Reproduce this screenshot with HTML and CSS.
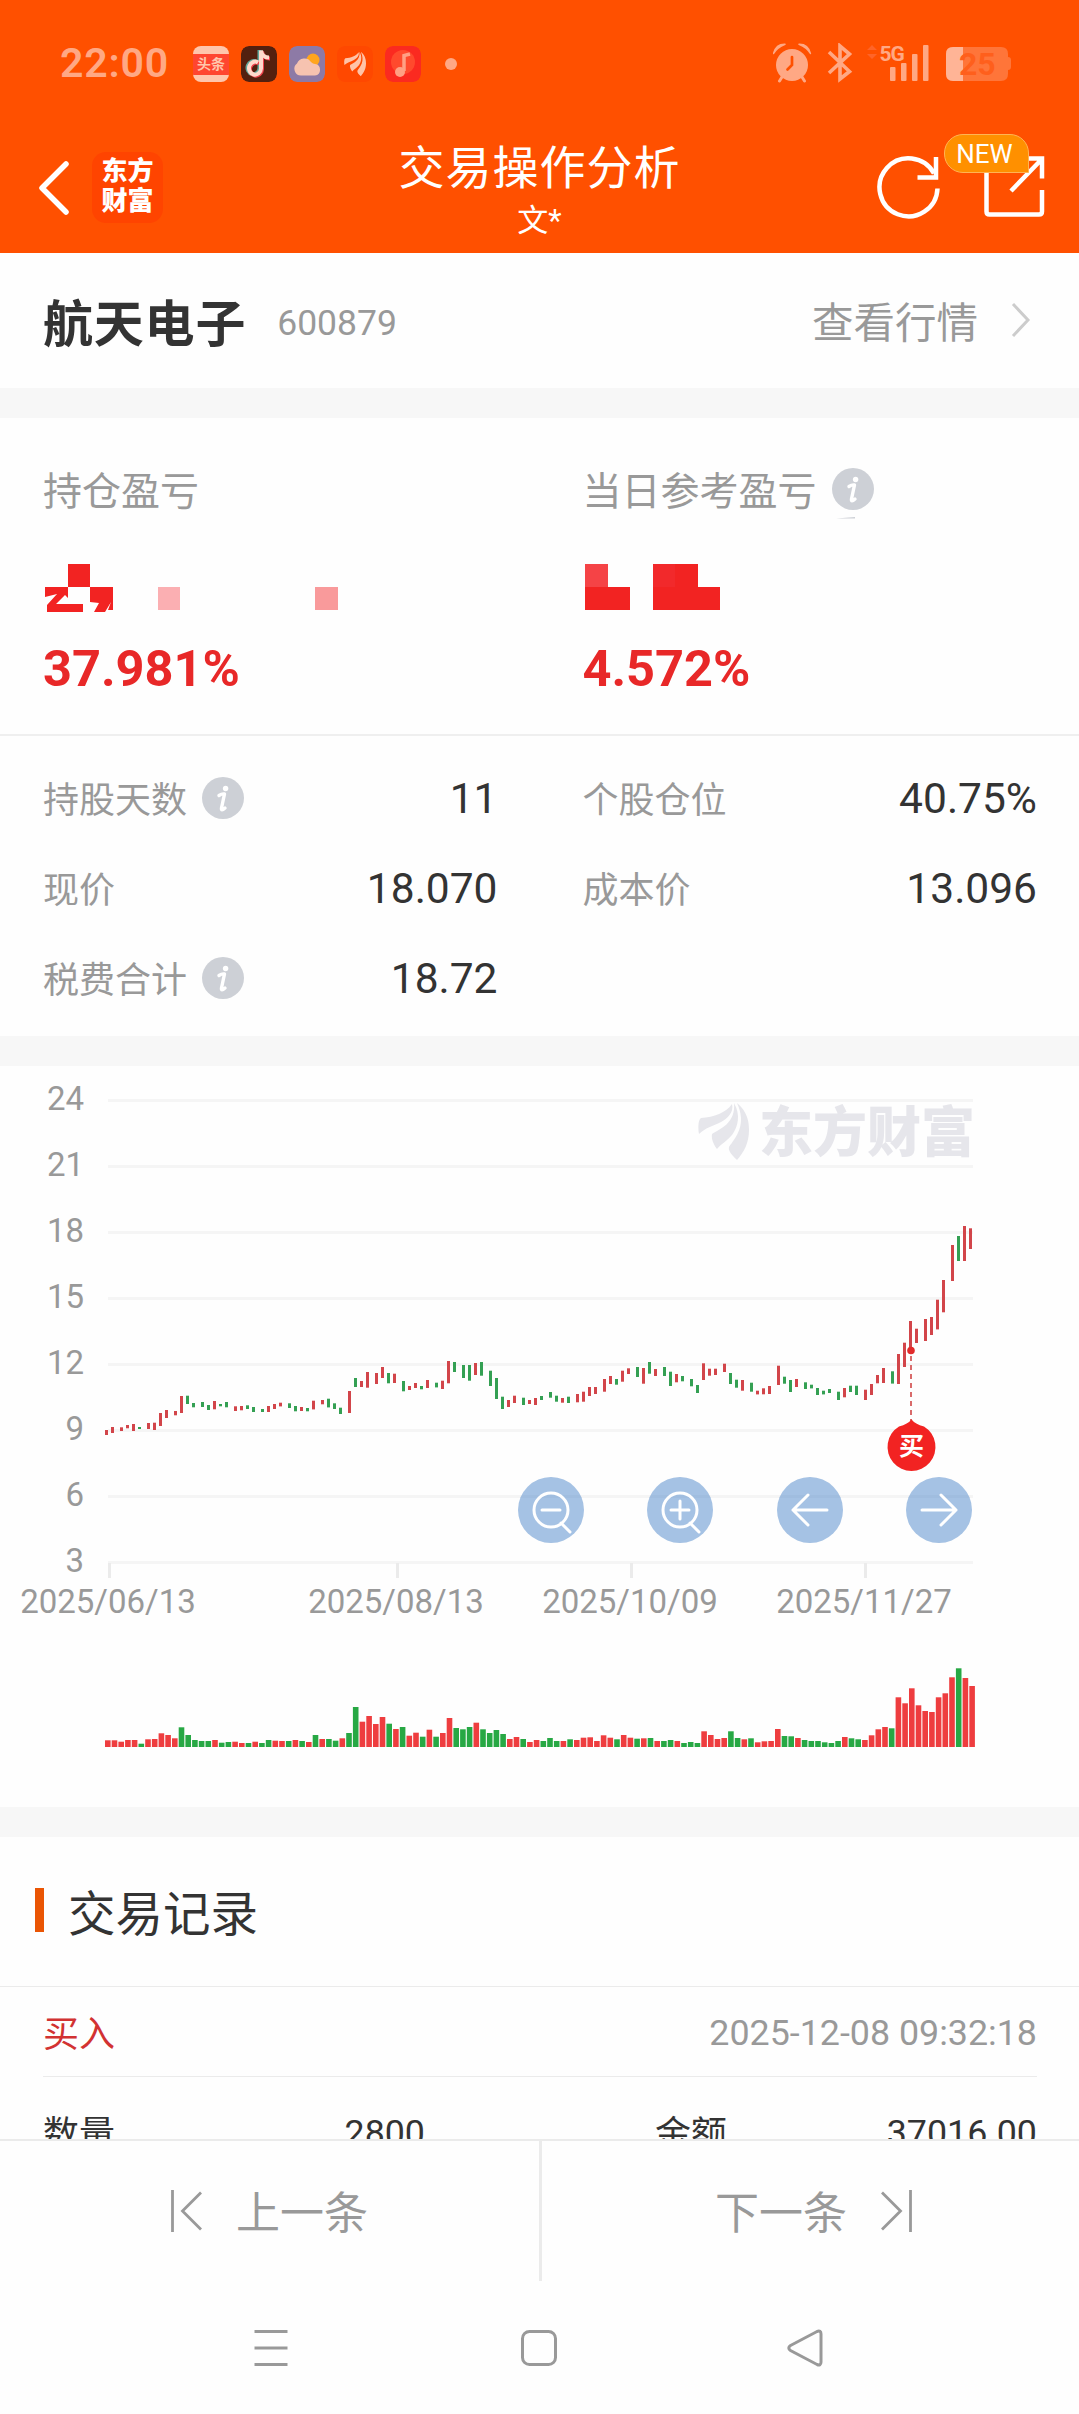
FILE: index.html
```html
<!DOCTYPE html>
<html lang="zh-CN">
<head>
    <meta charset="UTF-8">
    <title>交易操作分析</title>
    <link rel="stylesheet" href="styles.css">
</head>
<body>

<svg width="0" height="0" class="symbols">
    <symbol id="wing" viewBox="0 0 51 57">
        <path d="M1 31C0 25 0 17 3 15C16 14 28 10 34 1C36 9 30 15 23 19C15 23 7 25 1 31Z"/>
        <path d="M36 0C43 12 40 24 34 32C29 38 23 41 19 46C16 42 13 36 14 31C22 26 38 20 36 0Z"/>
        <path d="M39 0C50 9 51 20 51 27C51 40 46 49 39 57C34 52 30 48 31 44C38 34 49 22 39 0Z"/>
    </symbol>
    <symbol id="info" viewBox="0 0 42 42">
        <circle cx="21" cy="21" r="21" fill="#cdd0d6"/>
        <circle cx="23.6" cy="11.5" r="2.7" fill="#fff"/>
        <path d="M17 18.5Q20 16.5 22.5 17L19.5 31Q19 34.5 23 31" fill="none" stroke="#fff" stroke-width="3.4" stroke-linecap="round" stroke-linejoin="round"/>
    </symbol>
</svg>

<div class="page">

    <header class="header">
        <div class="status-bar">
            <span class="time">22:00</span>
            <div class="apps">
                <div class="app toutiao"><span>头条</span></div>
                <svg class="app" viewBox="0 0 36 36">
                    <rect width="36" height="36" rx="8" fill="#53200f"/>
                    <g fill="none" stroke-width="4">
                        <path d="M17 16.5a6 6.5 0 1 0 3 6V4.5" stroke="#5fa79a" transform="translate(-1.5 -.5)"/>
                        <path d="M17 16.5a6 6.5 0 1 0 3 6V4.5q1 7 8 7" stroke="#f0424c" transform="translate(1 1)"/>
                        <path d="M17 16.5a6 6.5 0 1 0 3 6V4.5q1 7 8 7" stroke="#ffd9cb"/>
                    </g>
                </svg>
                <svg class="app" viewBox="0 0 36 36">
                    <rect width="36" height="36" rx="8" fill="#8d7aa6"/>
                    <circle cx="24" cy="14" r="6.5" fill="#ffa51d"/>
                    <path d="M12 29.5a6.7 6.7 0 0 1-4-12a8 8 0 0 1 14-1.5q2 2 4 2a5.8 5.8 0 0 1 0 11.5Z" fill="#f6c3b0"/>
                </svg>
                <svg class="app" viewBox="0 0 36 36">
                    <rect width="36" height="36" rx="8" fill="#ff4800"/>
                    <use href="#wing" x="7" y="5.5" width="22" height="25" fill="#ffc3a8"/>
                </svg>
                <svg class="app" viewBox="0 0 36 36">
                    <rect width="36" height="36" rx="8" fill="#fb2a20"/>
                    <circle cx="18" cy="16" r="12" fill="#ff4a2d"/>
                    <path d="M25 8l-6 1.5V25" fill="none" stroke="#ffa084" stroke-width="3.5"/>
                    <circle cx="15" cy="26" r="5" fill="#ffa084"/>
                </svg>
                <i class="dot"></i>
            </div>
            <svg class="status-icons" width="240" height="40" viewBox="0 0 240 40" fill="#ffa884">
                <!-- alarm -->
                <circle cx="19" cy="22" r="16"/>
                <path d="M.6 10.5Q3 1 12 1.3Q4 4.5 .6 10.5ZM37.4 10.5Q35 1 26 1.3Q34 4.5 37.4 10.5Z" stroke="#ffa884" stroke-width="1.5" stroke-linejoin="round"/>
                <path d="M9 34l-2.500 4M29 34l2.500 4" stroke="#ffa884" stroke-width="3" stroke-linecap="round"/>
                <path d="M19 14v8l-4.500 4.500" fill="none" stroke="#ff5000" stroke-width="2.7" stroke-linecap="round"/>
                <!-- bluetooth -->
                <path d="M56 9L76.500 28.500L67 36V3L76.500 11L56 30" fill="none" stroke="#ffa884" stroke-width="3.6"/>
                <!-- network -->
                <path d="M94 7l5-5l5 5ZM94 11l5 5l5-5Z" fill="#ff6428"/>
                <text x="106.5" y="17.5" class="net">5G</text>
                <rect x="117" y="24" width="5.5" height="14" rx="1"/>
                <rect x="128" y="20" width="5.5" height="18" rx="1"/>
                <rect x="139" y="11" width="5.5" height="27" rx="1"/>
                <rect x="150" y="2" width="5.5" height="36" rx="1"/>
                <!-- battery -->
                <path d="M180 4h48q7 0 7 7v3q3 0 3 3v7q0 3-3 3v4q0 7-7 7h-48q-7 0-7-7V11q0-7 7-7Z" fill="#ff7539"/>
                <path d="M190 4v34h-10q-7 0-7-7V11q0-7 7-7Z" fill="#ffb496"/>
                <text x="186" y="32" class="battery">25</text>
            </svg>
        </div>

        <div class="nav-bar">
            <div class="nav-left">
                <svg width="32" height="56" viewBox="0 0 32 56"><path d="M28 4L4 28L28 52" fill="none" stroke="#fff" stroke-width="5.5" stroke-linecap="round" stroke-linejoin="round"/></svg>
                <div class="brand">东方<br>财富</div>
            </div>
            <div class="nav-title">
                <h1>交易操作分析</h1>
                <p>文*</p>
            </div>
            <div class="nav-right">
                <svg width="64" height="66" viewBox="0 0 64 66" fill="none" stroke="#fff" stroke-width="4.5">
                    <path d="M60.5 34.500A29 29 0 1 1 57 19.500"/>
                    <path d="M59 3v20.500H40.500"/>
                </svg>
                <div class="share">
                    <svg width="62" height="64" viewBox="0 0 62 64" fill="none" stroke="#fff" stroke-width="4.5">
                        <path d="M2.500 6V57.500q0 3 3 3H55q3 0 3-3V36"/>
                        <path d="M36 4.500H58V24.500M27 37L57 6"/>
                    </svg>
                    <span class="badge">NEW</span>
                </div>
            </div>
        </div>
    </header>

    <section class="stock">
        <span class="stock-name">航天电子</span>
        <span class="stock-code">600879</span>
        <span class="stock-link">查看行情</span>
        <svg width="20" height="36" viewBox="0 0 20 36"><path d="M2 2L17 18L2 34" fill="none" stroke="#ccc" stroke-width="3"/></svg>
    </section>

    <section class="profit">
        <div class="profit-col">
            <div class="label">持仓盈亏</div>
            <svg class="mask" width="300" height="48" viewBox="0 0 300 48">
                <path d="M25 0H47V23H25ZM2 23H25V34L22 31L13 40H40V48H4V41L14 30L2 33ZM47 23H70V46H65L68 38L62 48H51L56 39L47 38Z" fill="#f22322"/>
                <rect x="115" y="23" width="22" height="23" fill="#fbafb2"/>
                <rect x="272" y="23" width="23" height="23" fill="#f99a9b"/>
            </svg>
            <div class="percent">37.981%</div>
        </div>
        <div class="profit-col">
            <div class="label">当日参考盈亏<svg class="info" width="42" height="52" viewBox="0 0 42 52"><use href="#info" width="42" height="42"/><path d="M4 50.500L23 49V50.500Z" fill="#cdd0d6"/></svg></div>
            <svg class="mask" width="300" height="48" viewBox="0 0 300 48">
                <rect x="2" y="0" width="23" height="23" fill="#f54346"/>
                <path d="M2 23H47V46H2ZM92 0H115V23H137V46H70V23H92Z" fill="#f22322"/>
                <rect x="70" y="0" width="22" height="23" fill="#f2292b"/>
            </svg>
            <div class="percent">4.572%</div>
        </div>
    </section>

    <section class="details">
        <div class="item"><span>持股天数<svg class="info" width="42" height="42"><use href="#info"/></svg></span><b>11</b></div>
        <div class="item"><span>个股仓位</span><b>40.75%</b></div>
        <div class="item"><span>现价</span><b>18.070</b></div>
        <div class="item"><span>成本价</span><b>13.096</b></div>
        <div class="item"><span>税费合计<svg class="info" width="42" height="42"><use href="#info"/></svg></span><b>18.72</b></div>
    </section>

    <section class="chart">
        <svg id="chart" width="1079" height="741" viewBox="0 0 1079 741">
            <g id="grid"></g>
            <use href="#wing" x="698" y="37" width="51" height="57" fill="#e6e6eb"/>
            <text x="759" y="86" class="watermark">东方财富</text>
            <g id="candles"></g>
            <g id="volumes"></g>
            <path d="M911 290V355" stroke="#d96b6b" stroke-width="2" stroke-dasharray="5 4"/>
            <circle cx="911" cy="284.500" r="3.8" fill="#e22b2b"/>
            <path d="M911.500 353.500Q915 358 924 360.500A24 24 0 1 1 899 360.500Q908 358 911.500 353.500Z" fill="#f22322"/>
            <text x="911.500" y="389" class="buy-mark">买</text>
        </svg>
        <div class="chart-tools">
            <svg viewBox="0 0 66 66"><circle cx="33" cy="33" r="33"/><path d="M24 33h18M43 46l9 9M50 33a17 17 0 1 0-34 0a17 17 0 1 0 34 0"/></svg>
            <svg viewBox="0 0 66 66"><circle cx="33" cy="33" r="33"/><path d="M24 33h18M33 24v18M43 46l9 9M50 33a17 17 0 1 0-34 0a17 17 0 1 0 34 0"/></svg>
            <svg viewBox="0 0 66 66"><circle cx="33" cy="33" r="33"/><path d="M50 33H16M31 18L16 33L31 48"/></svg>
            <svg viewBox="0 0 66 66"><circle cx="33" cy="33" r="33"/><path d="M16 33H50M35 18L50 33L35 48"/></svg>
        </div>
    </section>

    <section class="records">
        <h2>交易记录</h2>
        <div class="record">
            <div class="record-head">
                <span class="buy">买入</span>
                <span class="date">2025-12-08 09:32:18</span>
            </div>
            <div class="record-row">
                <div><span>数量</span><span class="num">2800</span></div>
                <div><span>金额</span><span class="num">37016.00</span></div>
            </div>
        </div>
    </section>

    <footer class="pager">
        <div class="prev">
            <svg width="34" height="44" viewBox="0 0 34 44"><path d="M3.500 1V43M32 3.500L13.500 22L32 40.500"/></svg>
            <span>上一条</span>
        </div>
        <div class="next">
            <span>下一条</span>
            <svg width="34" height="44" viewBox="0 0 34 44"><path d="M30.500 1V43M2 3.500L20.500 22L2 40.500"/></svg>
        </div>
    </footer>

    <div class="system-nav">
        <svg viewBox="0 0 40 40"><path d="M3.500 3.500h33M3.500 20h33M3.500 36.500h33"/></svg>
        <svg viewBox="0 0 40 40"><rect x="3.5" y="3.5" width="33" height="33" rx="7"/></svg>
        <svg viewBox="0 0 40 40"><path d="M4.500 17.500L31 3.500Q35 2 35 6V34Q35 38 31 36.500L4.500 22.500Q1 20 4.500 17.500Z"/></svg>
    </div>

</div>

<script src="chart.js"></script>
</body>
</html>
```

FILE: styles.css
```css
* {
    box-sizing: border-box;
    margin: 0;
    padding: 0;
}

body {
    font-family: Roboto, "Noto Sans CJK SC", sans-serif;
    background: #fff;
    color: #333;
}

svg {
    display: block;
    flex-shrink: 0;
}

.symbols {
    position: absolute;
}

.page {
    width: 1079px;
    height: 2414px;
    display: flex;
    flex-direction: column;
    overflow: hidden;
    background: #fefefe;
}

/* header */
.header {
    height: 253px;
    background: #ff5000;
    color: #fff;
}

.status-bar {
    display: flex;
    align-items: center;
    height: 126px;
    padding: 0 66px 0 60px;
}

.time {
    width: 133px;
    padding-bottom: 1px;
    font-size: 41px;
    font-weight: 600;
    letter-spacing: 0.8px;
    color: #ffa884;
}

.apps {
    display: flex;
    align-items: center;
    gap: 12px;
    padding-top: 2px;
}

.app {
    width: 36px;
    height: 36px;
    border-radius: 8px;
    overflow: hidden;
}

.toutiao {
    display: flex;
    align-items: center;
    background: #ffc6ac;
}

.toutiao span {
    width: 36px;
    height: 21px;
    line-height: 20px;
    font-size: 14px;
    font-weight: 700;
    text-align: center;
    background: #ff4630;
    color: #ffc6ac;
}

.dot {
    width: 12px;
    height: 12px;
    margin-left: 12px;
    border-radius: 50%;
    background: #ffa884;
}

.status-icons {
    margin-left: auto;
}

.net {
    font-size: 21px;
    font-weight: 700;
    letter-spacing: -1px;
}

.battery {
    font-size: 32px;
    font-weight: 700;
    fill: #ff5f1c;
}

.nav-bar {
    position: relative;
    display: flex;
    justify-content: space-between;
    height: 127px;
    padding: 0 33px 0 38px;
}

.nav-left {
    display: flex;
    align-items: center;
    gap: 22px;
    height: 123px;
}

.brand {
    width: 71px;
    height: 71px;
    padding-top: 4px;
    border-radius: 14px;
    background: #ff4400;
    font-size: 26px;
    font-weight: 900;
    line-height: 30px;
    text-align: center;
}

.nav-title {
    position: absolute;
    left: 0;
    right: 0;
    top: 12px;
    text-align: center;
}

.nav-title h1 {
    font-size: 46px;
    font-weight: 400;
    line-height: 60px;
    letter-spacing: 1px;
}

.nav-title p {
    font-size: 31px;
    line-height: 45px;
}

.nav-right {
    display: flex;
    gap: 43px;
    padding-top: 28px;
}

.share {
    position: relative;
}

.badge {
    position: absolute;
    left: -40px;
    top: -20px;
    width: 85px;
    height: 39px;
    padding-right: 4px;
    border: 1px solid #ffb454;
    border-radius: 19px 19px 0 19px;
    background: #ff9000;
    font-size: 26px;
    line-height: 38px;
    text-align: center;
}

/* stock */
.stock {
    display: flex;
    align-items: center;
    height: 135px;
    padding: 0 48px 0 43px;
}

.stock-name {
    padding-bottom: 2px;
    font-size: 50px;
    font-weight: 700;
    letter-spacing: 0.8px;
}

.stock-code {
    padding-top: 4px;
    margin-left: 31px;
    font-size: 35.5px;
    color: #999;
}

.stock-link {
    margin: 0 33px 0 auto;
    padding-bottom: 2px;
    font-size: 41.5px;
    color: #999;
}

.stock svg {
    margin-top: -1px;
}

/* profit */
.profit {
    display: flex;
    height: 348px;
    border-top: 30px solid #f7f7f7;
    border-bottom: 2px solid #efefef;
}

.profit-col {
    flex: 1;
    padding: 41px 0 0 43px;
}

.label {
    display: flex;
    align-items: center;
    height: 58px;
    font-size: 39px;
    color: #999;
}

.info {
    margin-left: 15px;
    position: relative;
    top: 1px;
}

.label .info {
    top: 6px;
}

.mask {
    margin-top: 47px;
}

.percent {
    margin-top: 27px;
    font-size: 50.5px;
    font-weight: 700;
    line-height: 60px;
    color: #e82828;
}

/* details */
.details {
    display: grid;
    grid-template-columns: 1fr 1fr;
    grid-auto-rows: 90px;
    height: 300px;
    padding-top: 17px;
}

.item {
    display: flex;
    align-items: center;
    justify-content: space-between;
    padding: 0 42px 0 43px;
    font-size: 36px;
    color: #999;
}

.item span {
    display: flex;
    align-items: center;
    padding-bottom: 3px;
}

.item b {
    font-size: 42.5px;
    font-weight: 400;
    color: #333;
}

/* chart */
.chart {
    position: relative;
    height: 801px;
    border-top: 30px solid #f7f7f7;
    border-bottom: 30px solid #f7f7f7;
}

.axis {
    font-size: 33px;
    fill: #999;
}

.watermark {
    font-size: 54px;
    font-weight: 900;
    fill: #e6e6eb;
}

.buy-mark {
    font-size: 25px;
    font-weight: 700;
    text-anchor: middle;
    fill: #fff;
}

.chart-tools {
    position: absolute;
    left: 518px;
    top: 411px;
    width: 454px;
    display: flex;
    justify-content: space-between;
}

.chart-tools svg {
    width: 66px;
    height: 66px;
}

.chart-tools circle {
    fill: rgba(75, 133, 201, 0.5);
}

.chart-tools path {
    fill: none;
    stroke: #fff;
    stroke-width: 3;
    stroke-linecap: round;
    stroke-linejoin: round;
}

/* records */
.records {
    height: 302px;
    overflow: hidden;
}

.records h2 {
    display: flex;
    align-items: center;
    height: 150px;
    padding: 0 0 3px 35px;
    border-bottom: 1px solid #ebebeb;
    font-size: 47.5px;
    font-weight: 400;
}

.records h2::before {
    content: "";
    width: 9px;
    height: 44px;
    margin-right: 24px;
    background: #ea5504;
}

.record {
    padding: 0 42px 0 43px;
    font-size: 36px;
}

.record-head {
    display: flex;
    align-items: center;
    justify-content: space-between;
    height: 90px;
    border-bottom: 1px solid #ebebeb;
}

.buy {
    padding-bottom: 2px;
    color: #d23232;
}

.date {
    padding-top: 3px;
    font-size: 35.8px;
    color: #999;
}

.record-row {
    display: flex;
    justify-content: space-between;
    height: 108px;
}

.record-row div {
    display: flex;
    align-items: center;
    justify-content: space-between;
    width: 382px;
}

.num {
    padding-top: 3px;
    font-size: 35.8px;
}

/* pager */
.pager {
    display: flex;
    height: 142px;
    border-top: 2px solid #ebebeb;
    background: #fefefe;
    font-size: 44px;
    color: #999;
}

.pager div {
    display: flex;
    align-items: center;
    gap: 33px;
}

.pager span {
    padding-bottom: 2px;
}

.pager .prev {
    width: 542px;
    padding-left: 169px;
    border-right: 3px solid #ebebeb;
}

.pager .next {
    flex: 1;
    padding-left: 173px;
}

.pager path {
    fill: none;
    stroke: #999;
    stroke-width: 2.8;
}

.system-nav {
    display: flex;
    justify-content: space-between;
    padding: 47px 253px 0 251px;
}

.system-nav svg {
    width: 40px;
    height: 40px;
    fill: none;
    stroke: #999;
    stroke-width: 3;
}
```

FILE: chart.js
```js
const RED = '#d2454a';
const GREEN = '#34a053';

// [up, top, bottom] in thirds of a pixel, counted from y = 274
const candles = [
    [1,270,285],[1,261,279],[1,262,273],[1,255,265],[1,252,273],[0,261,267],[1,249,267],[1,248,270],[1,219,258],[1,210,234],
    [1,213,226],[1,168,219],[0,167,192],[0,189,202],[0,186,201],[0,195,210],[1,183,208],[0,192,199],[0,186,202],[1,199,213],
    [1,198,211],[0,196,207],[0,201,216],[0,207,216],[1,198,216],[1,192,207],[1,188,199],[0,190,204],[0,198,214],[1,201,213],
    [0,204,214],[1,182,208],[1,180,193],[0,176,202],[0,190,207],[0,203,222],[1,153,219],[0,114,141],[1,123,141],[1,96,143],
    [1,99,132],[1,81,114],[0,99,130],[1,101,129],[0,123,154],[1,138,150],[1,129,144],[0,138,148],[1,120,144],[0,128,142],
    [1,122,147],[1,63,130],[0,66,96],[0,75,114],[0,75,122],[1,69,105],[0,66,107],[0,92,138],[0,114,177],[0,170,207],
    [1,180,201],[1,167,189],[0,173,195],[1,180,192],[1,174,195],[0,168,180],[0,156,173],[0,167,185],[1,174,188],[0,170,189],
    [1,162,187],[1,155,185],[1,141,168],[1,141,162],[1,117,155],[1,108,132],[0,117,134],[1,92,125],[1,85,102],[0,81,111],
    [1,84,131],[0,66,101],[1,87,108],[0,81,108],[0,95,138],[1,102,127],[0,108,124],[0,117,139],[0,135,159],[1,70,120],
    [1,86,107],[1,86,105],[1,71,96],[0,99,132],[0,119,143],[1,120,152],[0,128,155],[1,152,163],[1,145,163],[1,138,162],
    [1,77,135],[0,110,131],[0,120,156],[1,117,141],[0,127,147],[0,134,145],[0,144,165],[0,152,163],[0,147,159],[0,155,180],
    [1,144,172],[0,137,156],[0,137,165],[1,149,180],[1,132,165],[1,105,130],[1,84,129],[0,94,131],[1,42,132],[1,8,81],
    [1,-57,32],[1,-34,9],[1,-63,3],[1,-69,-15],[1,-121,-32],[1,-180,-83],[1,-285,-177],[0,-312,-237],[1,-342,-237],[1,-335,-273]
];

// bar heights, negative for a falling day
const volumes = [
    20,20,16,21,21,-10,23,24,41,36,26,-59,-36,-21,-18,-18,21,-13,-15,16,12,-12,16,-12,-21,19,18,-18,21,-18,15,-36,24,
    -24,-19,26,-42,-120,76,93,69,90,-70,54,-60,34,43,-31,52,-31,42,87,-57,-53,-60,73,-53,-42,-51,-39,24,30,-24,15,21,
    -18,-27,-18,18,-23,21,28,29,18,35,28,-23,36,28,-25,26,-27,18,-18,-21,18,-12,-15,-12,47,36,24,27,-47,-27,23,-26,14,
    17,18,54,-33,-32,27,-21,-18,-18,-14,-12,-18,30,-26,-23,21,35,53,60,-56,149,131,176,125,108,105,149,161,209,-236,207,183
];

function rect(x, y, w, h, fill) {
    return `<rect x="${x.toFixed(1)}" y="${y.toFixed(1)}" width="${w}" height="${h.toFixed(1)}" fill="${fill}"/>`;
}

let grid = '';
[24, 21, 18, 15, 12, 9, 6, 3].forEach((value, i) => {
    const y = 33 + i * 66;
    grid += rect(108, y, 865, 3, '#f5f5f5');
    grid += `<text x="84" y="${y + 11}" text-anchor="end" class="axis">${value}</text>`;
});

const dates = { '2025/06/13': 109, '2025/08/13': 397, '2025/10/09': 631, '2025/11/27': 865 };
for (const date in dates) {
    grid += rect(dates[date] - 1, 497, 3, 15, '#ebebeb');
    grid += `<text x="${dates[date] - 1}" y="547" text-anchor="middle" class="axis">${date}</text>`;
}
document.getElementById('grid').innerHTML = grid;

document.getElementById('candles').innerHTML = candles.map(([up, top, bottom], i) => {
    const x = 105 + 3 * Math.floor(i * 2.2333 + 0.75);
    return rect(x, 274 + top / 3, 3, (bottom - top) / 3, up ? RED : GREEN);
}).join('');

document.getElementById('volumes').innerHTML = volumes.map((v, i) => {
    const h = Math.abs(v) / 3;
    return rect(105 + i * 6.7, 681 - h, 5.6, h, v > 0 ? '#ee3d3f' : '#27a844');
}).join('');
```
